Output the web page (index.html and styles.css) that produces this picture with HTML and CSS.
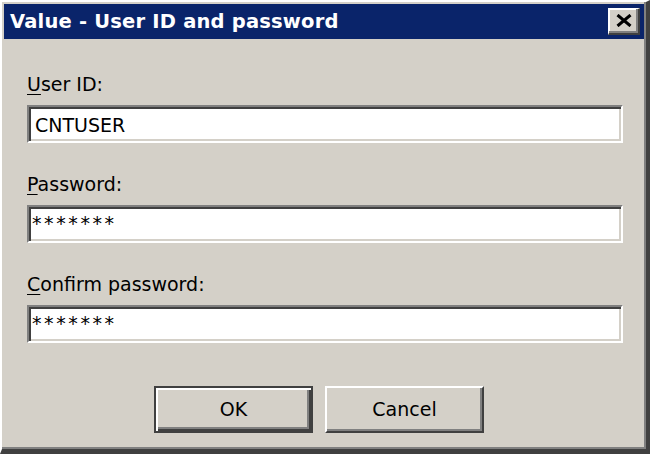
FILE: index.html
```html
<!DOCTYPE html>
<html>
<head>
<meta charset="utf-8">
<link rel="stylesheet" href="styles.css">
</head>
<body>
<div class="window">
  <div class="titlebar">
    <span class="title">Value - User ID and password</span>
    <div class="close">
      <svg width="16" height="13" viewBox="0 0 16 13"><path d="M1.5 1 L14.5 12 M14.5 1 L1.5 12" stroke="#000" stroke-width="3" fill="none"/></svg>
    </div>
  </div>
  <div class="content">
    <div class="field">
      <div class="label"><u>U</u>ser ID:</div>
      <div class="textbox">CNTUSER</div>
    </div>
    <div class="field">
      <div class="label"><u>P</u>assword:</div>
      <div class="textbox pw">*******</div>
    </div>
    <div class="field">
      <div class="label"><u>C</u>onfirm password:</div>
      <div class="textbox pw">*******</div>
    </div>
    <div class="buttons">
      <div class="btn default"><span>OK</span></div>
      <div class="btn"><span>Cancel</span></div>
    </div>
  </div>
</div>
</body>
</html>
```
FILE: styles.css
```css
html, body {
  margin: 0;
  padding: 0;
  background: #d4d0c8;
}
.window {
  width: 650px;
  height: 454px;
  box-sizing: border-box;
  background: #d4d0c8;
  border-style: solid;
  border-width: 2px 4px 5px 2px;
  border-color: #ffffff #404040 #404040 #ffffff;
  box-shadow: inset -2px -2px 0 #808080, inset 1px 1px 0 #d4d0c8;
  padding: 2px;
  display: flex;
  flex-direction: column;
  font-family: "DejaVu Sans", sans-serif;
  font-size: 19px;
  color: #000;
}
.titlebar {
  height: 35px;
  background: #0a246a;
  display: flex;
  align-items: center;
  justify-content: space-between;
  padding: 0 4px 0 6px;
}
.title {
  color: #fff;
  font-weight: bold;
  font-size: 19.5px;
  letter-spacing: 0.2px;
}
.close {
  width: 32px;
  height: 27px;
  box-sizing: border-box;
  background: #d4d0c8;
  border-style: solid;
  border-width: 1px 2px 2px 1px;
  border-color: #ffffff #404040 #404040 #ffffff;
  box-shadow: inset -2px -2px 0 #808080, inset 1px 1px 0 #ffffff;
  display: flex;
  align-items: center;
  justify-content: center;
  padding-bottom: 1px;
}
.content {
  padding: 34px 21px 0 23px;
  display: flex;
  flex-direction: column;
  gap: 30px;
}
.field {
  display: flex;
  flex-direction: column;
}
.label {
  line-height: 22px;
  height: 22px;
  margin-bottom: 10px;
}
.label u {
  text-decoration-thickness: 1px;
  text-underline-offset: 3px;
}
.textbox {
  height: 38px;
  box-sizing: border-box;
  background: #fff;
  border-style: solid;
  border-width: 2px;
  border-color: #808080 #ffffff #ffffff #808080;
  box-shadow: inset 2px 2px 0 #404040, inset -2px -2px 0 #d4d0c8;
  padding: 6px 0 0 6px;
  line-height: 24px;
}
.textbox.pw {
  letter-spacing: 2.6px;
  padding-left: 3px;
  padding-top: 4px;
}
.buttons {
  display: flex;
  gap: 12px;
  padding-left: 127px;
  margin-top: 13px;
}
.btn {
  width: 159px;
  height: 47px;
  box-sizing: border-box;
  border-style: solid;
  border-width: 2px;
  border-color: #ffffff #404040 #404040 #ffffff;
  box-shadow: inset -2px -2px 0 #808080;
  display: flex;
  align-items: center;
  justify-content: center;
  padding-bottom: 2px;
}
.btn.default {
  border-width: 2px;
  border-color: #404040;
  box-shadow: inset 2px 2px 0 #ffffff, inset -2px -2px 0 #404040, inset -4px -4px 0 #808080;
}
```
